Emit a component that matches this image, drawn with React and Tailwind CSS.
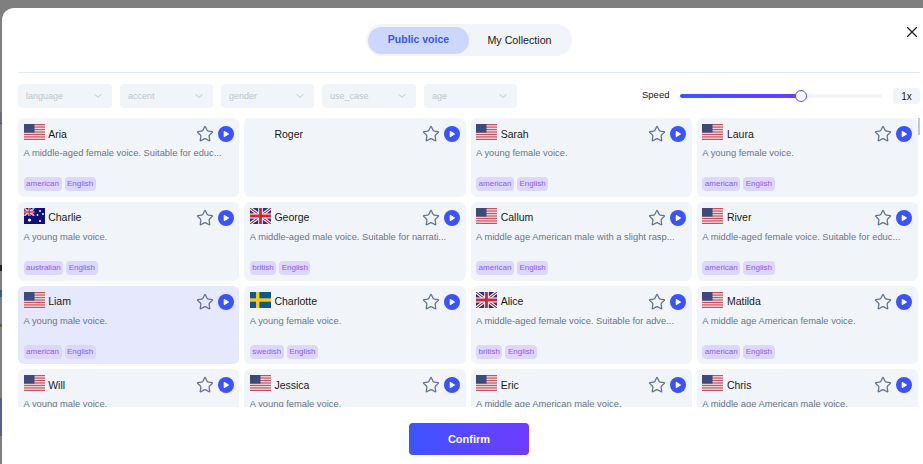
import { ChevronDown, Star, X } from "lucide-react";

const filters = [
  { label: "language", width: "w-[94px]" },
  { label: "accent", width: "w-[93px]" },
  { label: "gender", width: "w-[93px]" },
  { label: "use_case", width: "w-[94px]" },
  { label: "age", width: "w-[93px]" },
];

const middleEduc = "A middle-aged female voice. Suitable for educ...";
const youngFemale = "A young female voice.";
const youngMale = "A young male voice.";
const middleMale = "A middle age American male voice.";

const voices = [
  { name: "Aria", flag: "us", desc: middleEduc, tags: ["american", "English"] },
  { name: "Roger", flag: null, desc: "", tags: [] },
  { name: "Sarah", flag: "us", desc: youngFemale, tags: ["american", "English"] },
  { name: "Laura", flag: "us", desc: youngFemale, tags: ["american", "English"] },
  { name: "Charlie", flag: "au", desc: youngMale, tags: ["australian", "English"] },
  { name: "George", flag: "gb", desc: "A middle-aged male voice. Suitable for narrati...", tags: ["british", "English"] },
  { name: "Callum", flag: "us", desc: "A middle age American male with a slight rasp...", tags: ["american", "English"] },
  { name: "River", flag: "us", desc: middleEduc, tags: ["american", "English"] },
  { name: "Liam", flag: "us", desc: youngMale, tags: ["american", "English"], selected: true },
  { name: "Charlotte", flag: "se", desc: youngFemale, tags: ["swedish", "English"] },
  { name: "Alice", flag: "gb", desc: "A middle-aged female voice. Suitable for adve...", tags: ["british", "English"] },
  { name: "Matilda", flag: "us", desc: "A middle age American female voice.", tags: ["american", "English"] },
  { name: "Will", flag: "us", desc: youngMale, tags: ["american", "English"] },
  { name: "Jessica", flag: "us", desc: youngFemale, tags: ["american", "English"] },
  { name: "Eric", flag: "us", desc: middleMale, tags: ["american", "English"] },
  { name: "Chris", flag: "us", desc: middleMale, tags: ["american", "English"] },
];

function Flag({ code }) {
  if (code === "us") {
    const stripes = [0, 2, 4, 6, 8, 10, 12];
    return (
      <svg width="21" height="16" viewBox="0 0 21 16" className="block shrink-0 self-start">
        <rect width="21" height="16" fill="#f3e4e6" />
        {stripes.map((n) => (
          <rect key={n} y={n * 1.231} width="21" height="1.231" fill="#c9505f" />
        ))}
        <rect width="10.5" height="8.6" fill="#3c4a7c" />
      </svg>
    );
  }
  if (code === "gb") {
    return (
      <svg width="21" height="16" viewBox="0 0 60 40" preserveAspectRatio="none" className="block shrink-0 self-start">
        <rect width="60" height="40" fill="#1f3a7d" />
        <path d="M0 0L60 40M60 0L0 40" stroke="#fff" strokeWidth="8" />
        <path d="M0 0L60 40M60 0L0 40" stroke="#c8283c" strokeWidth="3" />
        <path d="M30 0V40M0 20H60" stroke="#fff" strokeWidth="13" />
        <path d="M30 0V40M0 20H60" stroke="#c8283c" strokeWidth="8" />
      </svg>
    );
  }
  if (code === "se") {
    return (
      <svg width="21" height="16" viewBox="0 0 21 16" className="block shrink-0 self-start">
        <rect width="21" height="16" fill="#10598f" />
        <rect x="6" width="3.4" height="16" fill="#f7c91c" />
        <rect y="6.3" width="21" height="3.4" fill="#f7c91c" />
      </svg>
    );
  }
  if (code === "au") {
    return (
      <svg width="21" height="16" viewBox="0 0 21 16" className="block shrink-0 self-start">
        <rect width="21" height="16" fill="#10107a" />
        <svg x="0" y="0" width="10.5" height="8" viewBox="0 0 60 40" preserveAspectRatio="none">
          <path d="M0 0L60 40M60 0L0 40" stroke="#fff" strokeWidth="8" />
          <path d="M0 0L60 40M60 0L0 40" stroke="#d5283c" strokeWidth="3" />
          <path d="M30 0V40M0 20H60" stroke="#fff" strokeWidth="13" />
          <path d="M30 0V40M0 20H60" stroke="#d5283c" strokeWidth="8" />
        </svg>
        <circle cx="5.5" cy="12" r="1.6" fill="#fff" />
        <circle cx="16" cy="3" r="0.9" fill="#fff" />
        <circle cx="19" cy="6" r="0.9" fill="#fff" />
        <circle cx="13.5" cy="7" r="0.9" fill="#fff" />
        <circle cx="16" cy="13" r="1" fill="#fff" />
      </svg>
    );
  }
  return <span className="block h-4 w-[21px] shrink-0" />;
}

function PlayButton() {
  return (
    <svg width="16" height="16" viewBox="0 0 16 16" className="block shrink-0">
      <circle cx="8" cy="8" r="8" fill="#3b53ff" />
      <path d="M6.2 5.3v5.4L10.6 8z" fill="#fff" stroke="#fff" strokeWidth="1" strokeLinejoin="round" />
    </svg>
  );
}

function VoiceCard({ voice }) {
  return (
    <div className={`flex h-[78.8px] flex-col rounded-md px-[5.6px] pt-[6px] ${voice.selected ? "bg-[#e6e8fd]" : "bg-[#f1f5f9]"}`}>
      <div className="flex h-5 items-center">
        <Flag code={voice.flag} />
        <span className="ml-[3.6px] mt-px flex-1 text-[10.5px] text-[#18181b]">{voice.name}</span>
        <Star size={18} strokeWidth={1.7} className="text-[#64748b]" />
        <span className="ml-[4px]"><PlayButton /></span>
      </div>
      <p className="mt-[2px] h-[14px] whitespace-nowrap text-[9.35px] leading-[14px] text-[#6b7688]">{voice.desc}</p>
      <div className="mt-[17px] flex gap-[3px]">
        {voice.tags.map((tag) => (
          <span key={tag} className="flex h-[14px] items-center rounded-[4px] bg-[#ddd6fe] px-[2.5px] text-[8px] text-[#8b5cf6]">{tag}</span>
        ))}
      </div>
    </div>
  );
}

export default function App() {
  return (
    <div className="relative h-[464px] w-[923px] overflow-hidden bg-[#7f7f7f] font-['Liberation_Sans',Arial,sans-serif]">
      {/* page behind the overlay peeking out on the left */}
      <div className="absolute left-0 top-[112px] h-[11px] w-[2px] bg-[#6e6a78]" />
      <div className="absolute left-0 top-[123px] h-px w-[2px] bg-[#3a4a8a]" />
      <div className="absolute left-0 top-[265px] h-[6px] w-[2px] bg-[#222]" />
      <div className="absolute left-0 top-[290px] h-[7px] w-[2px] bg-[#3a5a8a]" />
      <div className="absolute left-0 top-[324px] h-[3px] w-[2px] bg-[#6b5a30]" />
      <div className="absolute left-0 top-[398px] h-[38px] w-[2px] bg-[#5a5e8c]" />

      <div className="absolute left-[2px] top-2 h-[456px] w-[934px] rounded-tl-xl bg-white px-4">
        <div className="relative box-content flex h-[64px] items-center justify-center border-b border-[#e2e8f0]">
          <div className="flex h-8 w-[206px] items-center rounded-full bg-[#f1f5f9] p-[2px]">
            <span className="flex h-[27px] w-[101px] items-center justify-center rounded-full bg-[#ccd8fb] text-[10.5px] font-bold text-[#3b53ff]">Public voice</span>
            <span className="flex h-[27px] flex-1 items-center justify-center text-[10.7px] text-[#18181b]">My Collection</span>
          </div>
          <X size={18} strokeWidth={1.5} className="absolute right-[-1px] top-[15px] text-[#18181b]" />
        </div>

        <div className="mt-[11px] flex h-6 items-center">
          <div className="flex gap-2">
            {filters.map((item) => (
              <div key={item.label} className={`flex h-6 items-center justify-between rounded-[4px] bg-[#f1f5f9] px-2 text-[9px] text-[#bfc4cb] ${item.width}`}>
                <span className="mt-px">{item.label}</span>
                <ChevronDown size={12} strokeWidth={1.5} className="text-[#a8aeb8]" />
              </div>
            ))}
          </div>
          <span className="ml-[125px] mt-[-2px] text-[9.5px] leading-none text-[#18181b]">Speed</span>
          <div className="relative ml-[11px] h-1 w-[202px] rounded-full bg-[#f1f5f9]">
            <div className="h-1 w-[121px] rounded-full bg-gradient-to-r from-[#3b53ff] to-[#6d3bff]" />
            <div className="absolute left-[115px] top-[-4px] h-3 w-3 rounded-full border border-[#3b53ff] bg-white" />
          </div>
          <span className="ml-[11px] flex h-4 w-[27px] items-center justify-center rounded-[3px] bg-[#f1f5f9] text-[10px] text-[#18181b]">1x</span>
        </div>

        <div className="relative mt-[10px] h-[289px] overflow-hidden pr-[2px]">
          <div className="grid grid-cols-4 gap-[5px]">
            {voices.map((voice) => (
              <VoiceCard key={voice.name} voice={voice} />
            ))}
          </div>
          <div className="absolute right-0 top-0 h-[17px] w-[2px] bg-[#c4c7cc]" />
        </div>

        <div className="mt-4 flex justify-center">
          <button className="h-8 w-[120px] rounded-[4px] bg-gradient-to-r from-[#3b53ff] to-[#6d3bff] text-[11px] font-bold text-white">Confirm</button>
        </div>
      </div>
    </div>
  );
}
